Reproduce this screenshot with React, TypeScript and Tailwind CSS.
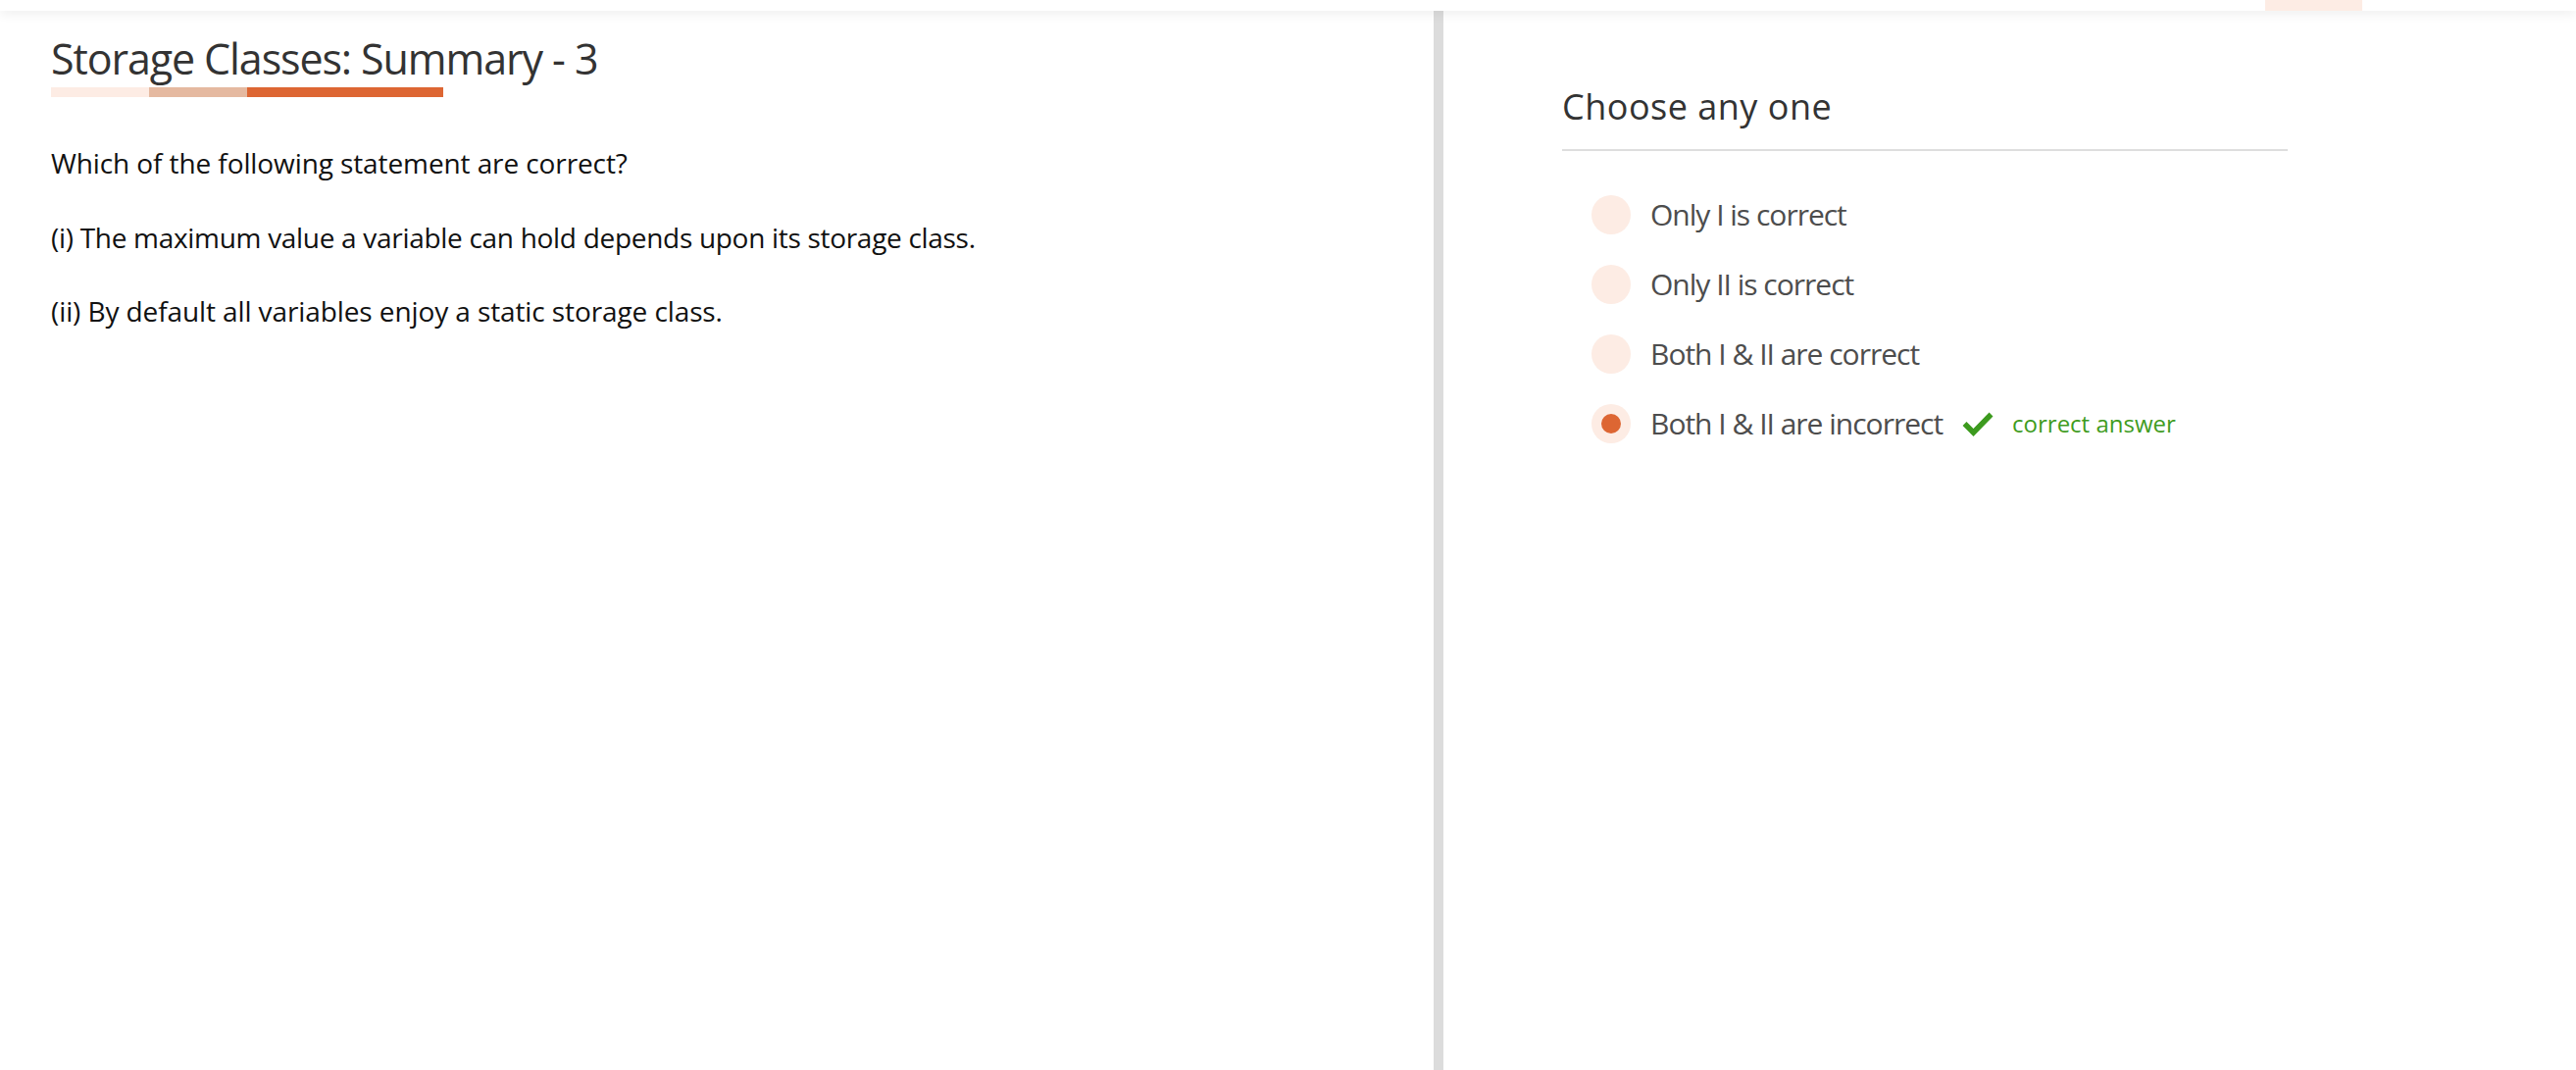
import React from "react";

const options = [
  { label: "Only I is correct", selected: false },
  { label: "Only II is correct", selected: false },
  { label: "Both I & II are correct", selected: false },
  { label: "Both I & II are incorrect", selected: true },
];

export default function App() {
  return (
    <div
      className="w-[2627px] h-[1091px] bg-white flex flex-col overflow-hidden"
      style={{ fontFamily: '"Open Sans", "Noto Sans", sans-serif' }}
    >
      <header className="relative z-10 h-[11px] shrink-0 bg-white shadow-[0_3px_12px_rgba(0,0,0,0.07)] flex justify-end pr-[218px]">
        <div className="w-[99px] h-full bg-[#fdece4]" />
      </header>
      <div className="flex flex-1">
        <section className="w-[1462px] shrink-0 pl-[52px] pt-[23px]">
          <h1 className="text-[43px] leading-[52px] tracking-[-1.1px] text-[#333333] font-normal">
            Storage Classes: Summary - 3
          </h1>
          <div className="flex mt-[3px] h-[10px]">
            <div className="w-[100px] bg-[#fdece4]" />
            <div className="w-[100px] bg-[#e5b9a0]" />
            <div className="w-[200px] bg-[#dd6633]" />
          </div>
          <p className="mt-[46px] text-[28px] leading-[42px] tracking-[-0.1px] text-[#111111]">
            Which of the following statement are correct?
          </p>
          <p className="mt-[34px] text-[28px] leading-[42px] tracking-[-0.3px] text-[#111111]">
            (i) The maximum value a variable can hold depends upon its storage class.
          </p>
          <p className="mt-[33px] text-[28px] leading-[42px] tracking-[-0.1px] text-[#111111]">
            (ii) By default all variables enjoy a static storage class.
          </p>
        </section>
        <div className="w-[10px] shrink-0 bg-[#dcdcdc]" />
        <section className="flex-1 pl-[121px] pt-[78px]">
          <h2 className="text-[36px] leading-[40px] tracking-[0.5px] text-[#333333] font-normal">
            Choose any one
          </h2>
          <div className="mt-[23px] w-[740px] h-[2px] bg-[#dedede]" />
          <div className="mt-[45px] flex flex-col gap-[31px] pl-[30px]">
            {options.map((o) => (
              <div key={o.label} className="flex items-center h-[40px]">
                <div className="w-[40px] h-[40px] rounded-full bg-[#fdece4] flex items-center justify-center shrink-0">
                  {o.selected && (
                    <div className="w-[20px] h-[20px] rounded-full bg-[#dd6633]" />
                  )}
                </div>
                <span className="ml-[20px] text-[30px] leading-[40px] tracking-[-1px] text-[#4d4d4d]">
                  {o.label}
                </span>
                {o.selected && (
                  <>
                    <svg
                      className="ml-[20px]"
                      width="32"
                      height="26"
                      viewBox="0 0 32 26"
                      fill="none"
                    >
                      <path
                        d="M2.5 13 L11.5 22 L29.5 3.5"
                        stroke="#3c9a1e"
                        strokeWidth="5.5"
                        strokeLinecap="butt"
                        strokeLinejoin="miter"
                      />
                    </svg>
                    <span className="ml-[19px] text-[24px] leading-[40px] text-[#3f9c1e]">
                      correct answer
                    </span>
                  </>
                )}
              </div>
            ))}
          </div>
        </section>
      </div>
    </div>
  );
}
